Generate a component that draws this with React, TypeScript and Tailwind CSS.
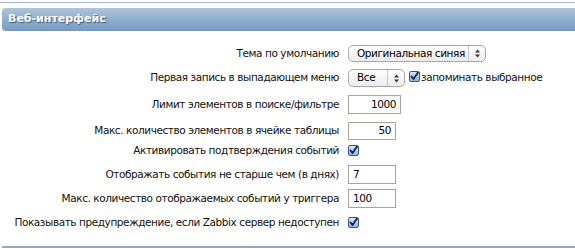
import React from "react";

const font = { fontFamily: '"DejaVu Sans", Verdana, sans-serif' };

function Check() {
  return (
    <span className="inline-flex h-[11px] w-[11px] items-center justify-center rounded-[2px] border border-[#3a5a8c] bg-gradient-to-b from-[#d6e6f8] to-[#8fb3e0]">
      <svg width="9" height="9" viewBox="0 0 9 9">
        <path d="M1.5 4.5 L3.5 7 L8 0.5" fill="none" stroke="#0d2350" strokeWidth="1.8" strokeLinecap="round" strokeLinejoin="round" />
      </svg>
    </span>
  );
}

function Select({ value, w, h }: { value: string; w: string; h: string }) {
  return (
    <div className={`flex ${h} ${w} items-stretch whitespace-nowrap rounded-[5px] border border-[#a8a8a8] bg-gradient-to-b from-white to-[#ececec] text-black`}>
      <span className="flex flex-1 items-center pl-[8px]">{value}</span>
      <span className="flex w-[17px] items-center justify-center border-l border-[#c8c8c8]">
        <svg width="5" height="9" viewBox="0 0 5 9">
          <path d="M0 3.5 L2.5 0.5 L5 3.5 Z M0 5.5 L2.5 8.5 L5 5.5 Z" fill="#333" />
        </svg>
      </span>
    </div>
  );
}

function Input({ value, w, h, right }: { value: string; w: string; h: string; right?: boolean }) {
  return (
    <div className={`flex ${h} ${w} items-center border border-[#a9a596] bg-white px-[4px] text-black ${right ? "justify-end" : ""}`}>
      {value}
    </div>
  );
}

function Row({ label, children, h }: { label: string; children: React.ReactNode; h: string }) {
  return (
    <div className={`flex ${h} items-center whitespace-nowrap`}>
      <div className="w-[339px] shrink-0 text-right">{label}</div>
      <div className="ml-[9px] flex items-center">{children}</div>
    </div>
  );
}

export default function App() {
  return (
    <div className="h-[248px] w-[575px] overflow-hidden bg-white text-[10.5px] tracking-[-0.42px] text-[#111]" style={font}>
      <div className="mt-[2px] h-[1px] w-full bg-[#9fb3cc]" />
      <div className="ml-[2px] mt-[5px] flex h-[23px] items-center rounded-l-[4px] bg-gradient-to-b from-[#aec4db] to-[#7599bf] pl-[6px]">
        <span className="text-[11px] font-bold tracking-normal text-white [text-shadow:1px_1px_1px_#3d5b80]">Веб-интерфейс</span>
      </div>
      <div className="mt-[14px] flex flex-col">
        <Row label="Тема по умолчанию" h="h-[17px]">
          <Select value="Оригинальная синяя" w="w-[138px]" h="h-[17px]" />
        </Row>
        <div className="h-[7px]" />
        <Row label="Первая запись в выпадающем меню" h="h-[18px]">
          <Select value="Все" w="w-[57px]" h="h-[18px]" />
          <span className="ml-[4px]"><Check /></span>
          <span className="ml-[1px]">запоминать выбранное</span>
        </Row>
        <div className="h-[8px]" />
        <Row label="Лимит элементов в поиске/фильтре" h="h-[19px]">
          <Input value="1000" w="w-[53px]" h="h-[19px]" right />
        </Row>
        <div className="h-[8px]" />
        <Row label="Макс. количество элементов в ячейке таблицы" h="h-[18px]">
          <Input value="50" w="w-[48px]" h="h-[18px]" right />
        </Row>
        <Row label="Активировать подтверждения событий" h="h-[21px]">
          <Check />
        </Row>
        <Row label="Отображать события не старше чем (в днях)" h="h-[27px]">
          <Input value="7" w="w-[48px]" h="h-[19px]" />
        </Row>
        <Row label="Макс. количество отображаемых событий у триггера" h="h-[21px]">
          <Input value="100" w="w-[48px]" h="h-[19px]" />
        </Row>
        <Row label="Показывать предупреждение, если Zabbix сервер недоступен" h="h-[27px]">
          <Check />
        </Row>
      </div>
      <div className="mt-[10px] ml-[2px] h-[2px] bg-[#9aa7b6]" />
    </div>
  );
}
